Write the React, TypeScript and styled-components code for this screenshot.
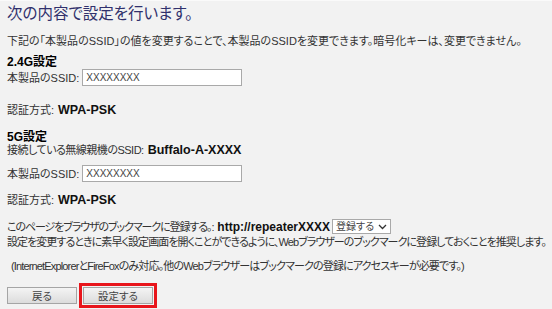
import styled, { createGlobalStyle } from "styled-components";

const GlobalStyle = createGlobalStyle`
    html, body {
        margin: 0;
        padding: 0;
        background-color: #f2f2f2;
    }
    body {
        font-family: "Liberation Sans", "Noto Sans CJK JP", sans-serif;
        font-feature-settings: "palt";
        color: #333;
        font-size: 11px;
    }
`;

const Page = styled.div`
    width: 552px;
    height: 309px;
    box-sizing: border-box;
    padding: 4px 0 0 7px;
    background-color: #f2f2f2;
    border-top: 1px solid #fafafa;
    overflow: hidden;
`;

const Title = styled.h1`
    margin: 0;
    font-size: 15.5px;
    font-weight: normal;
    color: #30306c;
    line-height: 18px;
`;

const Desc = styled.p`
    margin: 11px 0 0 0;
    line-height: 14px;
`;

const Section = styled.div<{ $gap?: number }>`
    margin-top: ${(p) => p.$gap ?? 12}px;
    display: flex;
    flex-direction: column;
`;

const SectionTitle = styled.div`
    font-weight: bold;
    color: #000;
    font-size: 12px;
    line-height: 12px;
`;

const Row = styled.div<{ $top?: number }>`
    display: flex;
    align-items: center;
    margin-top: ${(p) => p.$top ?? 0}px;
    line-height: 14px;
    white-space: nowrap;
`;

const Text = styled.span<{ $ls?: number }>`
    letter-spacing: ${(p) => p.$ls ?? 0}px;
`;

const Value = styled.span<{ $size?: number }>`
    font-family: "Liberation Sans", Arial, sans-serif;
    font-weight: bold;
    font-size: ${(p) => p.$size ?? 12.5}px;
    line-height: 14px;
    color: #111;
    margin-left: 4px;
`;

const TextInput = styled.input`
    width: 160px;
    height: 17px;
    box-sizing: border-box;
    margin: 0 0 0 3px;
    padding: 0 3px;
    border: 1px solid #a9a9a9;
    background: #fff;
    font-family: "Liberation Sans", sans-serif;
    font-size: 10px;
    color: #444;
    outline: none;
`;

const SelectBox = styled.div`
    display: inline-flex;
    align-items: center;
    justify-content: space-between;
    width: 59px;
    height: 15px;
    box-sizing: border-box;
    margin-left: 2px;
    padding: 0 3px 0 3px;
    border: 1px solid #a9a9a9;
    background: #fff;
    font-size: 10px;
    color: #444;
    svg {
        width: 9px;
        height: 6px;
    }
`;

const Note = styled.p`
    margin: 10px 0 0 4px;
    line-height: 14px;
    letter-spacing: -0.85px;
`;

const ButtonBar = styled.div`
    display: flex;
    align-items: center;
    gap: 2px;
    margin-top: 10px;
`;

const Button = styled.button`
    width: 70px;
    height: 17px;
    box-sizing: border-box;
    padding: 0;
    border: 1px solid #a5a5a5;
    background: linear-gradient(#f4f4f4, #dcdcdc);
    font-family: "Liberation Sans", "Noto Sans CJK JP", sans-serif;
    font-feature-settings: "palt";
    font-size: 10.5px;
    color: #444;
`;

const Highlight = styled.div`
    border: 3px solid #e8151b;
    padding: 1px;
    display: flex;
`;

function ChevronDown() {
    return (
        <svg viewBox="0 0 9 6" fill="none">
            <path d="M1 1 L4.5 4.5 L8 1" stroke="#333" strokeWidth="1.3" />
        </svg>
    );
}

function App() {
    return (
        <>
            <GlobalStyle />
            <Page>
                <Title>次の内容で設定を行います。</Title>
                <Desc>
                    下記の「本製品のSSID」の値を変更することで、本製品のSSIDを変更できます。暗号化キーは、変更できません。
                </Desc>
                <Section $gap={8}>
                    <SectionTitle>2.4G設定</SectionTitle>
                    <Row $top={1}>
                        <Text>本製品のSSID:</Text>
                        <TextInput defaultValue="XXXXXXXX" />
                    </Row>
                    <Row $top={17}>
                        <Text>認証方式:</Text>
                        <Value>WPA-PSK</Value>
                    </Row>
                </Section>
                <Section $gap={14}>
                    <SectionTitle>5G設定</SectionTitle>
                    <Row>
                        <Text $ls={-0.5}>接続している無線親機のSSID:</Text>
                        <Value>Buffalo-A-XXXX</Value>
                    </Row>
                    <Row $top={8}>
                        <Text>本製品のSSID:</Text>
                        <TextInput defaultValue="XXXXXXXX" />
                    </Row>
                    <Row $top={11}>
                        <Text>認証方式:</Text>
                        <Value>WPA-PSK</Value>
                    </Row>
                </Section>
                <Section $gap={12}>
                    <Row>
                        <Text $ls={-1.1}>このページをブラウザのブックマークに登録する。:</Text>
                        <Value $size={12}>http://repeaterXXXX</Value>
                        <SelectBox>
                            登録する
                            <ChevronDown />
                        </SelectBox>
                    </Row>
                    <Row $top={1}>
                        <Text $ls={-0.95}>
                            設定を変更するときに素早く設定画面を開くことができるように、Webブラウザーのブックマークに登録しておくことを推奨します。
                        </Text>
                    </Row>
                </Section>
                <Note>
                    (InternetExplorerとFireFoxのみ対応。他のWebブラウザーはブックマークの登録にアクセスキーが必要です。)
                </Note>
                <ButtonBar>
                    <Button>戻る</Button>
                    <Highlight>
                        <Button>設定する</Button>
                    </Highlight>
                </ButtonBar>
            </Page>
        </>
    );
}
export default App;
